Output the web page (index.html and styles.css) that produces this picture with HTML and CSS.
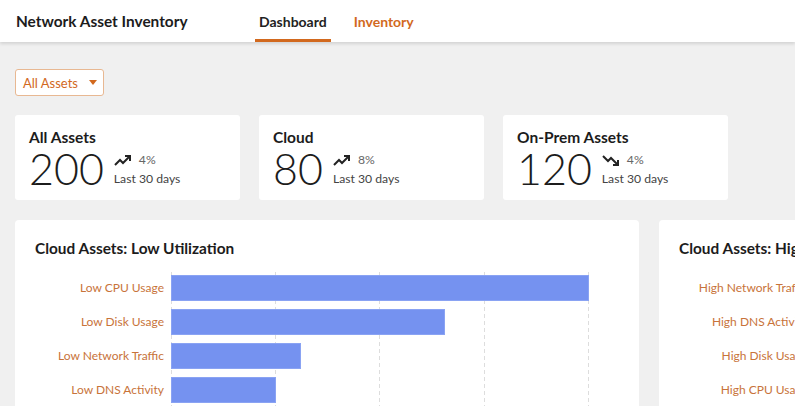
FILE: index.html
```html
<!DOCTYPE html>
<html lang="en">
<head>
    <meta charset="UTF-8">
    <meta name="viewport" content="width=device-width, initial-scale=1.0">
    <title>Network Asset Inventory</title>
    <link rel="stylesheet" href="styles.css">
</head>

<body>
  <header class="topbar">
    <div class="brand">Network Asset Inventory</div>
    <nav class="tabs">
      <a class="tab active" href="#">Dashboard</a>
      <a class="tab" href="#">Inventory</a>
    </nav>
  </header>

  <main class="content">
    <div class="filter">
      <button class="dropdown">All Assets <span class="caret"></span></button>
    </div>

    <section class="stats">
      <div class="stat-card">
        <h3>All Assets</h3>
        <div class="stat-body">
          <span class="stat-num">200</span>
          <div class="stat-meta">
            <div class="trend">
              <svg width="18" height="11" viewBox="0 0 18 11"><path d="M1 10 L6 5 L9 8 L15 2" fill="none" stroke="#222" stroke-width="2"/><path d="M11 1 H16 V6" fill="none" stroke="#222" stroke-width="2"/></svg>
              <span>4%</span>
            </div>
            <div class="period">Last 30 days</div>
          </div>
        </div>
      </div>
      <div class="stat-card">
        <h3>Cloud</h3>
        <div class="stat-body">
          <span class="stat-num">80</span>
          <div class="stat-meta">
            <div class="trend">
              <svg width="18" height="11" viewBox="0 0 18 11"><path d="M1 10 L6 5 L9 8 L15 2" fill="none" stroke="#222" stroke-width="2"/><path d="M11 1 H16 V6" fill="none" stroke="#222" stroke-width="2"/></svg>
              <span>8%</span>
            </div>
            <div class="period">Last 30 days</div>
          </div>
        </div>
      </div>
      <div class="stat-card">
        <h3>On-Prem Assets</h3>
        <div class="stat-body">
          <span class="stat-num">120</span>
          <div class="stat-meta">
            <div class="trend">
              <svg width="18" height="11" viewBox="0 0 18 11"><path d="M1 1 L6 6 L9 3 L15 9" fill="none" stroke="#222" stroke-width="2"/><path d="M11 10 H16 V5" fill="none" stroke="#222" stroke-width="2"/></svg>
              <span>4%</span>
            </div>
            <div class="period">Last 30 days</div>
          </div>
        </div>
      </div>
    </section>

    <section class="charts">
      <div class="chart-card">
        <h3>Cloud Assets: Low Utilization</h3>
        <div class="chart">
          <div class="labels">
            <span>Low CPU Usage</span>
            <span>Low Disk Usage</span>
            <span>Low Network Traffic</span>
            <span>Low DNS Activity</span>
          </div>
          <div class="plot">
            <div class="bar" style="width: 100%"></div>
            <div class="bar" style="width: 65.5%"></div>
            <div class="bar" style="width: 31%"></div>
            <div class="bar" style="width: 25%"></div>
          </div>
        </div>
      </div>
      <div class="chart-card">
        <h3>Cloud Assets: High Utilization</h3>
        <div class="chart">
          <div class="labels">
            <span>High Network Traffic</span>
            <span>High DNS Activity</span>
            <span>High Disk Usage</span>
            <span>High CPU Usage</span>
          </div>
          <div class="plot">
            <div class="bar" style="width: 100%"></div>
            <div class="bar" style="width: 70%"></div>
            <div class="bar" style="width: 40%"></div>
            <div class="bar" style="width: 25%"></div>
          </div>
        </div>
      </div>
    </section>
  </main>
</body>
</html>
```

FILE: styles.css
```css
body {
  font-family: 'Lato', 'Liberation Sans', sans-serif;
  margin: 0;
  padding: 0;
  background-color: #f0f0f0;
  color: #1c1c1c;
  overflow: hidden;
}
.topbar {
  background: #fff;
  height: 42px;
  display: flex;
  align-items: stretch;
  padding-left: 16px;
  box-shadow: 0 2px 3px rgba(0, 0, 0, 0.12);
  position: relative;
  z-index: 2;
}
.brand {
  font-size: 15.4px;
  font-weight: 700;
  display: flex;
  align-items: center;
  width: 239px;
}
.tabs {
  display: flex;
  gap: 19px;
}
.tab {
  display: flex;
  align-items: center;
  padding: 0 4px;
  font-size: 14px;
  font-weight: 700;
  text-decoration: none;
  color: #d2691e;
  border-bottom: 3px solid transparent;
  padding-top: 3px;
}
.tab.active {
  color: #222;
  border-bottom-color: #d2691e;
}
.content {
  padding: 27px 15px 0;
}
.filter {
  margin-bottom: 19px;
}
.dropdown {
  font-family: inherit;
  font-size: 13px;
  color: #d2691e;
  background: #fff;
  border: 1px solid #e8b892;
  border-radius: 3px;
  height: 27px;
  width: 89px;
  padding: 0 0 0 7px;
  display: flex;
  align-items: center;
  gap: 11px;
}
.caret {
  width: 0;
  height: 0;
  border-left: 4px solid transparent;
  border-right: 4px solid transparent;
  border-top: 5px solid #d2691e;
}
.stats {
  display: flex;
  gap: 19px;
  margin-bottom: 20px;
}
.stat-card {
  background: #fff;
  border-radius: 3px;
  width: 225px;
  height: 85px;
  box-sizing: border-box;
  padding: 14px 14px 0;
}
.stat-card h3 {
  margin: 0 0 3px;
  font-size: 15.5px;
  font-weight: 700;
  line-height: 16px;
}
.stat-body {
  display: flex;
  align-items: center;
  gap: 10px;
}
.stat-num {
  font-size: 43px;
  font-weight: 300;
  line-height: 42px;
}
.stat-meta {
  font-size: 12.2px;
  color: #444;
  padding-top: 2px;
}
.trend {
  display: flex;
  align-items: center;
  gap: 7px;
  color: #666;
  line-height: 18px;
}
.period {
  line-height: 20px;
}
.charts {
  display: flex;
  gap: 20px;
}
.chart-card {
  flex: 0 0 624px;
  background: #fff;
  border-radius: 4px;
  padding: 20px 20px 0;
  box-sizing: border-box;
  height: 200px;
}
.chart-card h3 {
  margin: 0 0 16px;
  font-size: 15.4px;
  font-weight: 700;
  line-height: 16px;
}
.chart {
  display: flex;
}
.labels {
  width: 129px;
  padding-right: 7px;
  padding-top: 3px;
  display: flex;
  flex-direction: column;
  align-items: flex-end;
  gap: 8px;
}
.labels span {
  height: 26px;
  line-height: 26px;
  font-size: 12px;
  color: #c8733a;
  white-space: nowrap;
}
.plot {
  width: 418px;
  padding-top: 3px;
  padding-bottom: 20px;
  display: flex;
  flex-direction: column;
  gap: 8px;
  background-image:
    repeating-linear-gradient(to bottom, #ddd 0 4px, transparent 4px 7px),
    repeating-linear-gradient(to bottom, #ddd 0 4px, transparent 4px 7px),
    repeating-linear-gradient(to bottom, #ddd 0 4px, transparent 4px 7px),
    repeating-linear-gradient(to bottom, #ddd 0 4px, transparent 4px 7px),
    repeating-linear-gradient(to bottom, #ddd 0 4px, transparent 4px 7px);
  background-size: 1px 100%;
  background-position: 0 0, 104px 0, 208px 0, 313px 0, 417px 0;
  background-repeat: no-repeat;
}
.bar {
  height: 26px;
  background: #7592f0;
  box-sizing: border-box;
  border: 1px solid #8aa3f3;
}
```
